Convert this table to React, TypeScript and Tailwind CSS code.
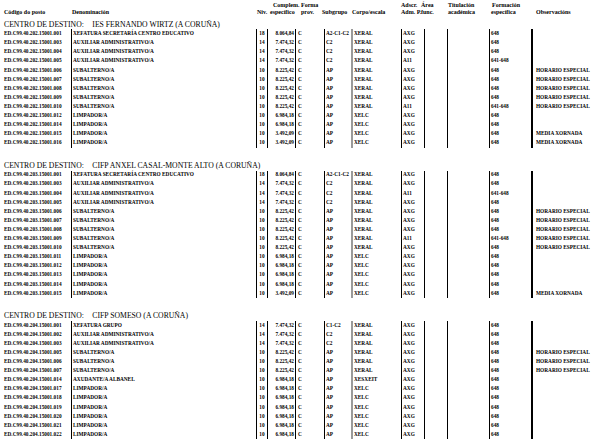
import React from 'react';

const sections = [
  {
    name: 'IES FERNANDO WIRTZ (A CORUÑA)',
    code: '202',
    rows: [
      '001|XEFATURA SECRETARÍA CENTRO EDUCATIVO|18|8.064,84|A2-C1-C2|XERAL|AXG|648|',
      '003|AUXILIAR ADMINISTRATIVO/A|14|7.474,32|C2|XERAL|AXG|648|',
      '004|AUXILIAR ADMINISTRATIVO/A|14|7.474,32|C2|XERAL|AXG|648|',
      '005|AUXILIAR ADMINISTRATIVO/A|14|7.474,32|C2|XERAL|A11|641-648|',
      '006|SUBALTERNO/A|10|8.225,42|AP|XERAL|AXG|648|HORARIO ESPECIAL',
      '007|SUBALTERNO/A|10|8.225,42|AP|XERAL|AXG|648|HORARIO ESPECIAL',
      '008|SUBALTERNO/A|10|8.225,42|AP|XERAL|AXG|648|HORARIO ESPECIAL',
      '009|SUBALTERNO/A|10|8.225,42|AP|XERAL|AXG|648|HORARIO ESPECIAL',
      '010|SUBALTERNO/A|10|8.225,42|AP|XERAL|A11|641-648|HORARIO ESPECIAL',
      '012|LIMPADOR/A|10|6.984,18|AP|XELC|AXG|648|',
      '014|LIMPADOR/A|10|6.984,18|AP|XELC|AXG|648|',
      '015|LIMPADOR/A|10|3.492,09|AP|XELC|AXG|648|MEDIA XORNADA',
      '016|LIMPADOR/A|10|3.492,09|AP|XELC|AXG|648|MEDIA XORNADA',
    ],
  },
  {
    name: 'CIFP ANXEL CASAL-MONTE ALTO (A CORUÑA)',
    code: '203',
    rows: [
      '001|XEFATURA SECRETARÍA CENTRO EDUCATIVO|18|8.064,84|A2-C1-C2|XERAL|AXG|648|',
      '003|AUXILIAR ADMINISTRATIVO/A|14|7.474,32|C2|XERAL|AXG|648|',
      '004|AUXILIAR ADMINISTRATIVO/A|14|7.474,32|C2|XERAL|A11|641-648|',
      '005|AUXILIAR ADMINISTRATIVO/A|14|7.474,32|C2|XERAL|AXG|648|',
      '006|SUBALTERNO/A|10|8.225,42|AP|XERAL|AXG|648|HORARIO ESPECIAL',
      '007|SUBALTERNO/A|10|8.225,42|AP|XERAL|AXG|648|HORARIO ESPECIAL',
      '008|SUBALTERNO/A|10|8.225,42|AP|XERAL|AXG|648|HORARIO ESPECIAL',
      '009|SUBALTERNO/A|10|8.225,42|AP|XERAL|A11|641-648|HORARIO ESPECIAL',
      '010|SUBALTERNO/A|10|8.225,42|AP|XERAL|AXG|648|HORARIO ESPECIAL',
      '011|LIMPADOR/A|10|6.984,18|AP|XELC|AXG|648|',
      '012|LIMPADOR/A|10|6.984,18|AP|XELC|AXG|648|',
      '013|LIMPADOR/A|10|6.984,18|AP|XELC|AXG|648|',
      '014|LIMPADOR/A|10|6.984,18|AP|XELC|AXG|648|',
      '015|LIMPADOR/A|10|3.492,09|AP|XELC|AXG|648|MEDIA XORNADA',
    ],
  },
  {
    name: 'CIFP SOMESO (A CORUÑA)',
    code: '204',
    rows: [
      '001|XEFATURA GRUPO|14|7.474,32|C1-C2|XERAL|AXG|648|',
      '002|AUXILIAR ADMINISTRATIVO/A|14|7.474,32|C2|XERAL|AXG|648|',
      '003|AUXILIAR ADMINISTRATIVO/A|14|7.474,32|C2|XERAL|AXG|648|',
      '005|SUBALTERNO/A|10|8.225,42|AP|XERAL|AXG|648|HORARIO ESPECIAL',
      '006|SUBALTERNO/A|10|8.225,42|AP|XERAL|AXG|648|HORARIO ESPECIAL',
      '007|SUBALTERNO/A|10|8.225,42|AP|XERAL|AXG|648|HORARIO ESPECIAL',
      '014|AXUDANTE/A ALBANEL|10|6.984,18|AP|XESXEIT|AXG|648|',
      '017|LIMPADOR/A|10|6.984,18|AP|XELC|AXG|648|',
      '018|LIMPADOR/A|10|6.984,18|AP|XELC|AXG|648|',
      '019|LIMPADOR/A|10|6.984,18|AP|XELC|AXG|648|',
      '020|LIMPADOR/A|10|6.984,18|AP|XELC|AXG|648|',
      '021|LIMPADOR/A|10|6.984,18|AP|XELC|AXG|648|',
      '022|LIMPADOR/A|10|6.984,18|AP|XELC|AXG|648|',
    ],
  },
];

const Row = ({ line, code }: { line: string; code: string }) => {
  const [n, den, niv, comp, sub, corpo, adscr, form, obs] = line.split('|');
  return (
    <div className="grid grid-cols-[71px_185px_11px_29px_28px_27px_50px_23px_23px_42px_42px_85px] h-[9.1px] text-[5.3px] font-bold leading-none whitespace-nowrap">
      <div className="flex items-center pl-[4px]">ED.C99.40.{code}.15001.{n}</div>
      <div className="flex items-center border-l border-black pl-[1px]">{den}</div>
      <div className="flex items-center justify-center border-l border-black">{niv}</div>
      <div className="flex items-center justify-end border-l border-r border-black pr-[1px]">{comp}</div>
      <div className="flex items-center pl-[2px]">C</div>
      <div className="flex items-center border-l border-black pl-[1px]">{sub}</div>
      <div className="flex items-center border-l-2 border-[#9a9a9a] pl-[1px]">{corpo}</div>
      <div className="flex items-center border-l border-black pl-[1px]">{adscr}</div>
      <div className="border-l border-black"></div>
      <div className="border-l border-black"></div>
      <div className="flex items-center border-l border-black pl-[1px]">{form}</div>
      <div className="flex items-center border-l-2 border-black pl-[3px]">{obs}</div>
    </div>
  );
};

const Header = () => (
  <div className="grid grid-cols-[72px_185px_12px_32px_21px_30px_49px_20px_27px_43px_45px_80px] h-[20px] pt-[1.5px] text-[6px] font-bold leading-[7px] whitespace-nowrap">
    <div className="pl-[4px] pt-[7px]">Código do posto</div>
    <div className="pt-[7px]">Denominación</div>
    <div className="pt-[7px]">Niv.</div>
    <div className="flex flex-col">
      <span className="pl-[4px]">Complem.</span>
      <span className="pl-[1px]">específico</span>
    </div>
    <div className="flex flex-col">
      <span>Forma</span>
      <span>prov.</span>
    </div>
    <div className="pt-[7px]">Subgrupo</div>
    <div className="pt-[7px]">Corpo/escala</div>
    <div className="flex flex-col">
      <span>Adscr.</span>
      <span>Adm. P.</span>
    </div>
    <div className="flex flex-col">
      <span>Área</span>
      <span>func.</span>
    </div>
    <div className="flex flex-col">
      <span>Titulación</span>
      <span>académica</span>
    </div>
    <div className="flex flex-col">
      <span className="pl-[1px]">Formación</span>
      <span>específica</span>
    </div>
    <div className="pt-[7px]">Observacións</div>
  </div>
);

export default function App() {
  return (
    <div className="w-[616px] h-[439px] overflow-hidden bg-white text-black font-['Liberation_Serif',serif]">
      <Header />
      {sections.map((s, i) => (
        <div key={s.code} className={i > 0 ? 'mt-[13.7px]' : ''}>
          <div className="flex items-center h-[9.3px] pl-[4px] text-[7.7px] leading-none whitespace-nowrap">
            <span>CENTRO DE DESTINO:</span>
            <span className="ml-[8.5px]">{s.name}</span>
          </div>
          {s.rows.map(r => (
            <Row key={r} line={r} code={s.code} />
          ))}
        </div>
      ))}
    </div>
  );
}
